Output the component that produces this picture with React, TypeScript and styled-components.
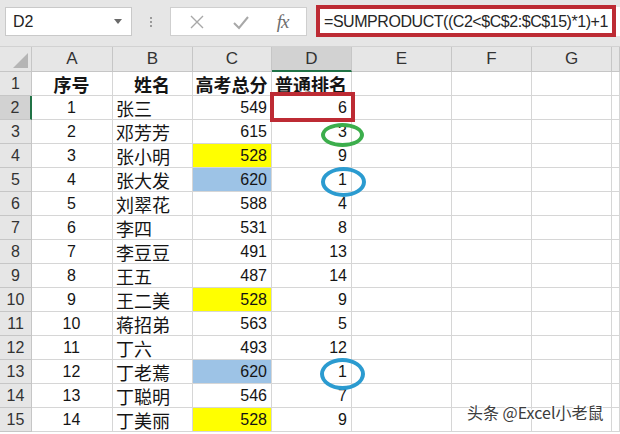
import React from "react";
import styled, { createGlobalStyle } from "styled-components";

const Global = createGlobalStyle`
  html, body { margin: 0; padding: 0; background: #ffffff; }
  body { font-family: "Liberation Sans", "Noto Sans CJK SC", sans-serif; overflow: hidden; }
  * { box-sizing: border-box; }
`;

const Page = styled.div`
  position: relative;
  width: 620px;
  height: 434px;
  overflow: hidden;
  background: #ffffff;
`;

const Toolbar = styled.div`
  height: 47px;
  background: #e6e6e6;
  border-bottom: 1px solid #d2d2d2;
  display: flex;
  align-items: flex-start;
  padding: 7px 0 0 5px;
`;

const NameBox = styled.div`
  width: 127px;
  height: 29px;
  background: #ffffff;
  border: 1px solid #c9c9c9;
  display: flex;
  align-items: center;
  justify-content: space-between;
  padding: 0 9px 0 7px;
  font-family: "Liberation Sans", sans-serif;
  font-size: 16px;
  color: #222;
`;

const Dots = styled.div`
  width: 38px;
  height: 29px;
  display: flex;
  flex-direction: column;
  align-items: center;
  justify-content: center;
  gap: 2px;
  & > span {
    width: 2px;
    height: 2px;
    background: #9a9a9a;
  }
`;

const FxBox = styled.div`
  width: 137px;
  height: 29px;
  background: #ffffff;
  border: 1px solid #cfcfcf;
  display: flex;
  align-items: center;
  justify-content: space-around;
  padding: 0 4px;
`;

const FxLabel = styled.span`
  font-family: "Liberation Serif", serif;
  font-style: italic;
  font-size: 19px;
  color: #6d6d6d;
  letter-spacing: -1px;
`;

const FormulaInput = styled.div`
  margin-left: 10px;
  flex: 1;
  height: 29px;
  background: #ffffff;
  display: flex;
  align-items: center;
  padding-left: 7px;
  font-family: "Liberation Sans", sans-serif;
  font-size: 16px;
  letter-spacing: -0.45px;
  color: #262626;
  white-space: nowrap;
`;

const Grid = styled.div`
  display: grid;
  grid-template-columns: 32px 81px 80px 79px 80px 100px 80px 80px 1fr;
  grid-template-rows: 25px repeat(15, 24px);
`;

const Corner = styled.div`
  position: relative;
  background: #e6e6e6;
  border-right: 1px solid #c6c6c6;
  border-bottom: 1px solid #c6c6c6;
  &::after {
    content: "";
    position: absolute;
    right: 3px;
    bottom: 3px;
    width: 0;
    height: 0;
    border-left: 15px solid transparent;
    border-bottom: 15px solid #b5b5b5;
  }
`;

const ColHead = styled.div<{ $sel?: boolean }>`
  background: ${(p) => (p.$sel ? "#d2d2d2" : "#e6e6e6")};
  border-right: 1px solid #c6c6c6;
  border-bottom: ${(p) => (p.$sel ? "2px solid #217346" : "1px solid #c6c6c6")};
  display: flex;
  align-items: center;
  justify-content: center;
  font-family: "Liberation Sans", sans-serif;
  font-size: 17px;
  color: #333;
`;

const RowHead = styled.div<{ $sel?: boolean }>`
  background: ${(p) => (p.$sel ? "#d2d2d2" : "#e6e6e6")};
  border-right: ${(p) => (p.$sel ? "2px solid #217346" : "1px solid #c6c6c6")};
  border-bottom: 1px solid #c6c6c6;
  display: flex;
  align-items: center;
  justify-content: center;
  font-family: "Liberation Sans", sans-serif;
  font-size: 16px;
  color: #333;
`;

const Cell = styled.div<{ $align?: "left" | "center" | "right"; $fill?: string; $bold?: boolean }>`
  background: ${(p) => p.$fill || "#ffffff"};
  border-right: 1px solid #d6d6d6;
  border-bottom: 1px solid #d6d6d6;
  display: flex;
  align-items: center;
  justify-content: ${(p) =>
    p.$align === "left" ? "flex-start" : p.$align === "right" ? "flex-end" : "center"};
  padding: 0 4px 0 3px;
  font-family: "Liberation Sans", "Noto Sans CJK SC", sans-serif;
  font-size: ${(p) => (p.$bold ? "18px" : "16px")};
  font-weight: ${(p) => (p.$bold ? 700 : 400)};
  color: #151515;
  white-space: nowrap;
  overflow: visible;
`;

const CjkText = styled.span`
  font-family: "Noto Sans CJK SC", sans-serif;
  font-size: 18px;
`;

const Callout = styled.div<{ $l: number; $t: number; $w: number; $h: number }>`
  position: absolute;
  left: ${(p) => p.$l}px;
  top: ${(p) => p.$t}px;
  width: ${(p) => p.$w}px;
  height: ${(p) => p.$h}px;
  border: 4px solid #bd2b34;
  pointer-events: none;
`;

const Ring = styled.div<{ $l: number; $t: number; $w: number; $h: number; $c: string }>`
  position: absolute;
  left: ${(p) => p.$l}px;
  top: ${(p) => p.$t}px;
  width: ${(p) => p.$w}px;
  height: ${(p) => p.$h}px;
  border: 4px solid ${(p) => p.$c};
  border-radius: 50%;
  pointer-events: none;
`;

const Watermark = styled.div`
  position: absolute;
  left: 467px;
  top: 400px;
  font-family: "Noto Sans CJK SC", "Liberation Sans", sans-serif;
  font-size: 16px;
  color: #3c3c3c;
  white-space: nowrap;
  text-shadow: 1px 0 0 #fff, -1px 0 0 #fff, 0 1px 0 #fff, 0 -1px 0 #fff, 1px 1px 1px #fff, -1px -1px 1px #fff;
`;

type Row = [number, string, number, number, string?];
const rows: Row[] = [
  [1, "张三", 549, 6],
  [2, "邓芳芳", 615, 3],
  [3, "张小明", 528, 9, "#ffff00"],
  [4, "张大发", 620, 1, "#9dc3e6"],
  [5, "刘翠花", 588, 4],
  [6, "李四", 531, 8],
  [7, "李豆豆", 491, 13],
  [8, "王五", 487, 14],
  [9, "王二美", 528, 9, "#ffff00"],
  [10, "蒋招弟", 563, 5],
  [11, "丁六", 493, 12],
  [12, "丁老蔫", 620, 1, "#9dc3e6"],
  [13, "丁聪明", 546, 7],
  [14, "丁美丽", 528, 9, "#ffff00"],
];

const letters = ["A", "B", "C", "D", "E", "F", "G", ""];
const emptyCols = [0, 1, 2, 3];

export default function App() {
  return (
    <Page>
      <Global />
      <Toolbar>
        <NameBox>
          <span>D2</span>
          <svg width="8" height="5" viewBox="0 0 8 5">
            <path d="M0 0 L8 0 L4 5 Z" fill="#6a6a6a" />
          </svg>
        </NameBox>
        <Dots>
          <span />
          <span />
          <span />
        </Dots>
        <FxBox>
          <svg width="16" height="16" viewBox="0 0 16 16">
            <path d="M2 2 L14 14 M14 2 L2 14" stroke="#a8a8a8" strokeWidth="1.4" fill="none" />
          </svg>
          <svg width="18" height="16" viewBox="0 0 18 16">
            <path d="M2 9 L7 14 L16 3" stroke="#a8a8a8" strokeWidth="2" fill="none" />
          </svg>
          <FxLabel>fx</FxLabel>
        </FxBox>
        <FormulaInput>=SUMPRODUCT((C2&lt;$C$2:$C$15)*1)+1</FormulaInput>
      </Toolbar>
      <Grid>
        <Corner />
        {letters.map((l, i) => (
          <ColHead key={i} $sel={l === "D"}>
            {l}
          </ColHead>
        ))}
        <RowHead>1</RowHead>
        <Cell $bold>序号</Cell>
        <Cell $bold>姓名</Cell>
        <Cell $bold>高考总分</Cell>
        <Cell $bold>普通排名</Cell>
        {emptyCols.map((c) => (
          <Cell key={c} />
        ))}
        {rows.map(([n, name, score, rank, fill], i) => (
          <React.Fragment key={n}>
            <RowHead $sel={i === 0}>{i + 2}</RowHead>
            <Cell>{n}</Cell>
            <Cell $align="left">
              <CjkText>{name}</CjkText>
            </Cell>
            <Cell $align="right" $fill={fill}>
              {score}
            </Cell>
            <Cell $align="right">{rank}</Cell>
            {emptyCols.map((c) => (
              <Cell key={c} />
            ))}
          </React.Fragment>
        ))}
      </Grid>
      <Callout $l={316} $t={5} $w={300} $h={32} />
      <Callout $l={270} $t={92} $w={85} $h={30} />
      <Ring $l={321} $t={123} $w={43} $h={24} $c="#3cae4c" />
      <Ring $l={321} $t={167} $w={45} $h={30} $c="#2b9bd0" />
      <Ring $l={320} $t={358} $w={45} $h={32} $c="#2b9bd0" />
      <Watermark>头条 @Excel小老鼠</Watermark>
    </Page>
  );
}
